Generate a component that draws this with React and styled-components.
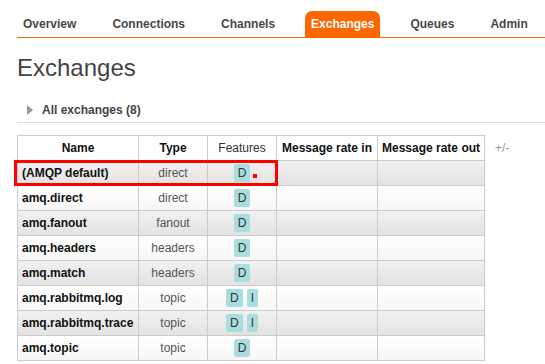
import React from 'react';
import styled, { createGlobalStyle } from 'styled-components';

const GlobalStyle = createGlobalStyle`
    body {
        margin: 0;
        background: #fff;
        font-family: "Liberation Sans", Arial, sans-serif;
        font-size: 12px;
        color: #444;
    }
`;

const Page = styled.div`
    padding-top: 11px;
`;

const Menu = styled.ul`
    display: flex;
    gap: 24px;
    list-style: none;
    margin: 0 0 0 17px;
    padding: 0;
    border-bottom: 1px solid #f60;
`;

const Tab = styled.li`
    height: 26px;
    line-height: 26px;
    padding: 0 6px;
    border-radius: 7px 7px 0 0;
    font-size: 12px;
    font-weight: bold;
    color: #484848;
    ${(props) => props.active && `
        background: #f60;
        color: #fff;
    `}
`;

const Main = styled.div`
    padding-left: 17px;
`;

const Title = styled.h1`
    margin: 16px 0 0;
    font-size: 24px;
    line-height: 28px;
    font-weight: normal;
    color: #444;
`;

const SectionHead = styled.h2`
    display: flex;
    align-items: center;
    gap: 9px;
    margin: 20px 0 0;
    padding: 0 0 4px 10px;
    line-height: 16px;
    font-size: 12px;
    font-weight: bold;
    color: #444;
    border-bottom: 1px solid #ddd;
`;

const Arrow = styled.span`
    width: 0;
    height: 0;
    border-top: 5px solid transparent;
    border-bottom: 5px solid transparent;
    border-left: 6px solid #999;
`;

const TableRow = styled.div`
    display: flex;
    align-items: flex-start;
    gap: 10px;
    margin-top: 12px;
`;

const Wrap = styled.div`
    position: relative;
`;

const Table = styled.table`
    border-collapse: collapse;
    table-layout: fixed;
    width: 468px;
    font-size: 12px;
`;

const Th = styled.th`
    height: 24px;
    padding: 0 4px;
    border: 1px solid #ccc;
    background: #fff;
    text-align: center;
    white-space: nowrap;
    font-weight: ${(props) => (props.plain ? 'normal' : 'bold')};
    color: ${(props) => (props.plain ? '#333' : '#111')};
`;

const Tr = styled.tr`
    background: ${(props) => (props.alt
        ? 'linear-gradient(#f1f1f1, #e2e2e2)'
        : 'linear-gradient(#fff, #f6f6f6)')};
`;

const Td = styled.td`
    height: 24px;
    padding: 0 4px;
    border: 1px solid #ccc;
    white-space: nowrap;
    text-align: ${(props) => props.align || 'left'};
    font-weight: ${(props) => (props.bold ? 'bold' : 'normal')};
    color: ${(props) => (props.bold ? '#111' : '#555')};
`;

const Badge = styled.abbr`
    display: inline-block;
    padding: 2px 4px;
    margin: 0 2px;
    line-height: 14px;
    border-radius: 2px;
    background: #aadddd;
    color: #333;
    text-decoration: none;
`;

const Highlight = styled.div`
    position: absolute;
    left: -3px;
    top: 25px;
    width: 258px;
    height: 20px;
    border: 3px solid #f00;
    pointer-events: none;
`;

const Dot = styled.span`
    position: absolute;
    left: 236px;
    top: 39px;
    width: 4px;
    height: 4px;
    background: #f00;
`;

const Toggle = styled.span`
    padding-top: 6px;
    color: #999;
    font-size: 12px;
`;

const tabs = ['Overview', 'Connections', 'Channels', 'Exchanges', 'Queues', 'Admin'];

const exchanges = [
    { name: '(AMQP default)', type: 'direct', features: ['D'] },
    { name: 'amq.direct', type: 'direct', features: ['D'] },
    { name: 'amq.fanout', type: 'fanout', features: ['D'] },
    { name: 'amq.headers', type: 'headers', features: ['D'] },
    { name: 'amq.match', type: 'headers', features: ['D'] },
    { name: 'amq.rabbitmq.log', type: 'topic', features: ['D', 'I'] },
    { name: 'amq.rabbitmq.trace', type: 'topic', features: ['D', 'I'] },
    { name: 'amq.topic', type: 'topic', features: ['D'] },
];

export default function App() {
    return (
        <Page>
            <GlobalStyle />
            <Menu>
                {tabs.map((t) => (
                    <Tab key={t} active={t === 'Exchanges'}>{t}</Tab>
                ))}
            </Menu>
            <Main>
                <Title>Exchanges</Title>
                <SectionHead>
                    <Arrow />
                    All exchanges (8)
                </SectionHead>
                <TableRow>
                    <Wrap>
                        <Table>
                            <colgroup>
                                <col style={{ width: 121 }} />
                                <col style={{ width: 69 }} />
                                <col style={{ width: 69 }} />
                                <col style={{ width: 101 }} />
                                <col style={{ width: 107 }} />
                            </colgroup>
                            <thead>
                                <tr>
                                    <Th>Name</Th>
                                    <Th>Type</Th>
                                    <Th plain>Features</Th>
                                    <Th>Message rate in</Th>
                                    <Th>Message rate out</Th>
                                </tr>
                            </thead>
                            <tbody>
                                {exchanges.map((ex, i) => (
                                    <Tr key={ex.name} alt={i % 2 === 0}>
                                        <Td bold>{ex.name}</Td>
                                        <Td align="center">{ex.type}</Td>
                                        <Td align="center">
                                            {ex.features.map((f) => (
                                                <Badge key={f}>{f}</Badge>
                                            ))}
                                        </Td>
                                        <Td />
                                        <Td />
                                    </Tr>
                                ))}
                            </tbody>
                        </Table>
                        <Highlight />
                        <Dot />
                    </Wrap>
                    <Toggle>+/-</Toggle>
                </TableRow>
            </Main>
        </Page>
    );
}
